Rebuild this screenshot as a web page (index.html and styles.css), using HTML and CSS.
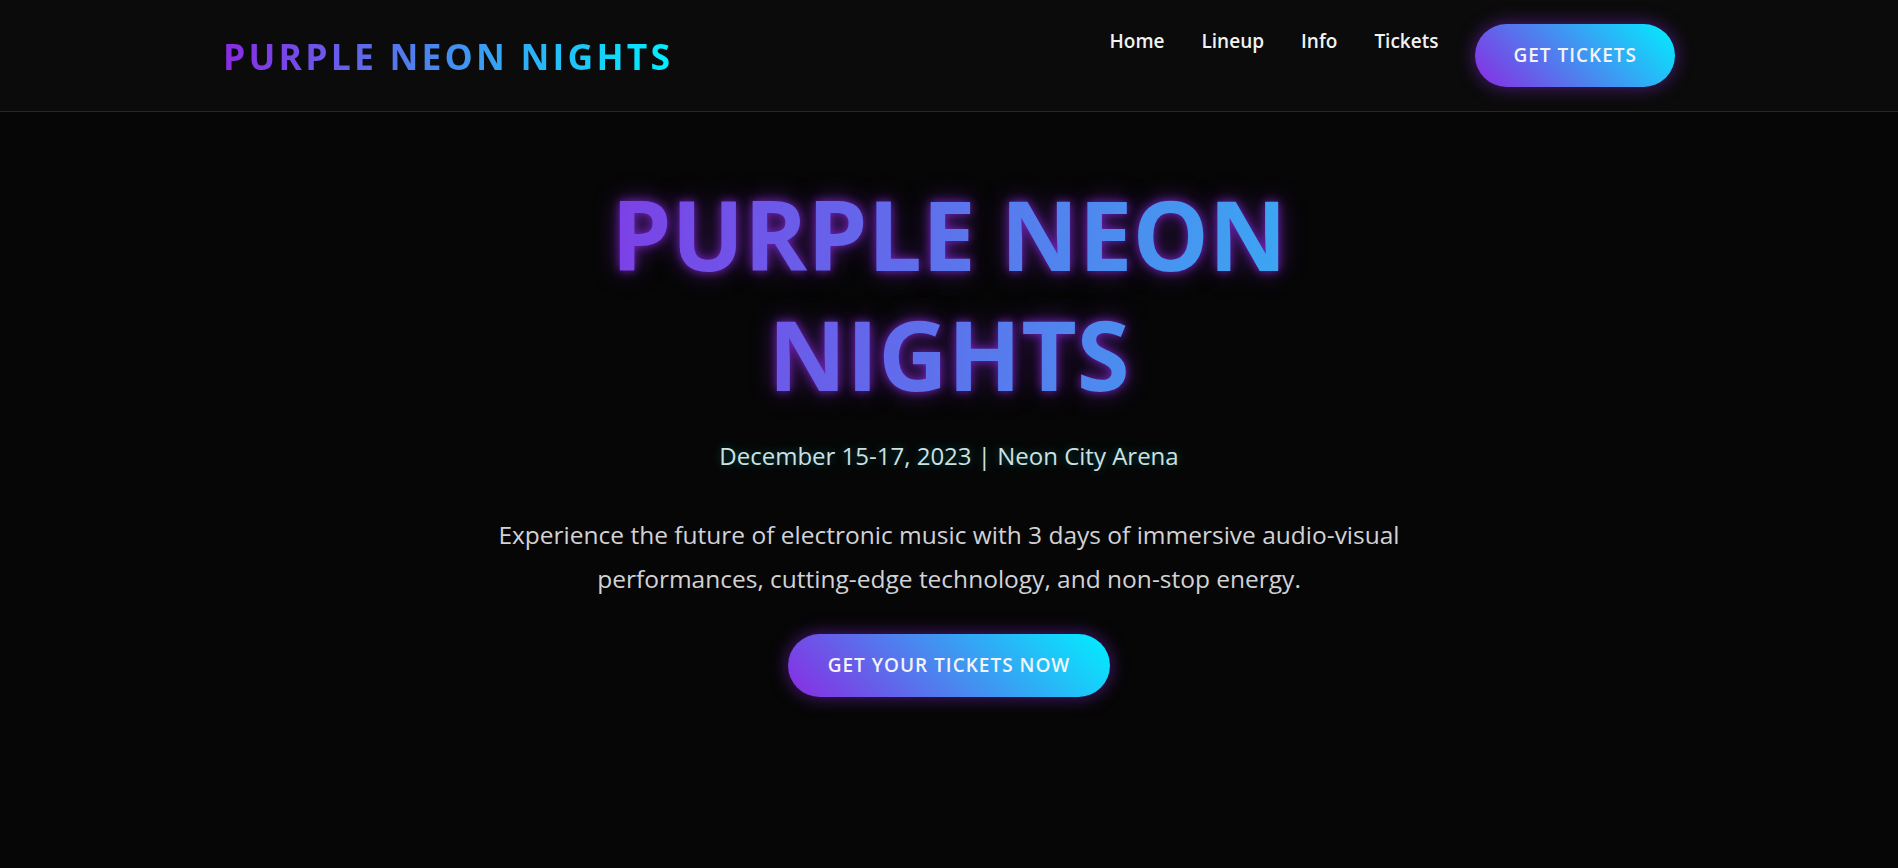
FILE: index.html
```html
<!DOCTYPE html>
<html lang="en">
<head>
<meta charset="utf-8">
<title>Purple Neon Nights</title>
<link rel="stylesheet" href="styles.css">
</head>
<body>
<header class="site-header">
  <div class="header-inner">
    <a class="logo" href="#">PURPLE NEON NIGHTS</a>
    <nav class="nav">
      <ul class="nav-list">
        <li><a href="#">Home</a></li>
        <li><a href="#">Lineup</a></li>
        <li><a href="#">Info</a></li>
        <li><a href="#">Tickets</a></li>
      </ul>
      <a class="btn" href="#">GET TICKETS</a>
    </nav>
  </div>
</header>
<main class="hero">
  <h1 class="hero-title" data-text="PURPLE NEON NIGHTS">PURPLE NEON NIGHTS</h1>
  <p class="hero-date">December 15-17, 2023 | Neon City Arena</p>
  <p class="hero-text">Experience the future of electronic music with 3 days of immersive audio-visual performances, cutting-edge technology, and non-stop energy.</p>
  <a class="btn btn-hero" href="#">GET YOUR TICKETS NOW</a>
</main>
</body>
</html>
```

FILE: styles.css
```css
* { box-sizing: border-box; }
html, body { margin: 0; padding: 0; }
body {
  background: #060606;
  color: #e6e6e6;
  font-family: "Open Sans", "Noto Sans", sans-serif;
  min-height: 868px;
}
a { text-decoration: none; }

.site-header {
  background: #0b0b0b;
  border-bottom: 1px solid rgba(138, 43, 226, 0.35);
}
.header-inner {
  max-width: 1452px;
  margin: 0 auto;
  height: 111px;
  display: flex;
  align-items: center;
  justify-content: space-between;
}
.logo {
  font-size: 35.5px;
  font-weight: 700;
  letter-spacing: 3.2px;
  background: linear-gradient(90deg, #8a2be2, #00f0ff);
  -webkit-background-clip: text;
  background-clip: text;
  -webkit-text-fill-color: transparent;
  color: transparent;
}
.nav {
  display: flex;
  align-items: flex-start;
  gap: 37px;
}
.nav-list {
  list-style: none;
  margin: 4px 0 0;
  padding: 0;
  display: flex;
  gap: 37px;
}
.nav-list a {
  color: #f2f2f2;
  font-size: 19px;
  font-weight: 600;
  line-height: 26px;
}
.btn {
  display: inline-block;
  color: #f4f4f8;
  font-size: 19px;
  font-weight: 600;
  letter-spacing: 1px;
  line-height: 23px;
  padding: 20px 38px;
  border-radius: 50px;
  background: linear-gradient(45deg, #8a2be2, #00f0ff);
  box-shadow: 0 0 18px rgba(138, 43, 226, 0.55);
}

.hero {
  display: flex;
  flex-direction: column;
  align-items: center;
  text-align: center;
  padding-top: 62px;
}
.hero-title {
  position: relative;
  margin: 0;
  max-width: 700px;
  font-size: 96px;
  font-weight: 700;
  line-height: 120px;
  background: linear-gradient(90deg, #7d3fe6 0%, #3aa8f2 100%);
  -webkit-background-clip: text;
  background-clip: text;
  -webkit-text-fill-color: transparent;
  color: transparent;
}
.hero-title::before {
  content: attr(data-text);
  position: absolute;
  inset: 0;
  z-index: -1;
  background: none;
  -webkit-text-fill-color: transparent;
  text-shadow: 0 0 10px rgba(138, 43, 226, 0.8), 0 0 24px rgba(138, 43, 226, 0.5);
}
.hero-date {
  margin: 24px 0 0;
  font-size: 24px;
  line-height: 36px;
  color: #cfe0e0;
  text-shadow: 0 0 10px rgba(0, 255, 255, 0.3);
}
.hero-text {
  margin: 39px 0 0;
  max-width: 930px;
  font-size: 24.5px;
  line-height: 44px;
  color: #d2d2d6;
}
.btn-hero {
  margin-top: 33px;
  padding: 20px 40px;
}
```
